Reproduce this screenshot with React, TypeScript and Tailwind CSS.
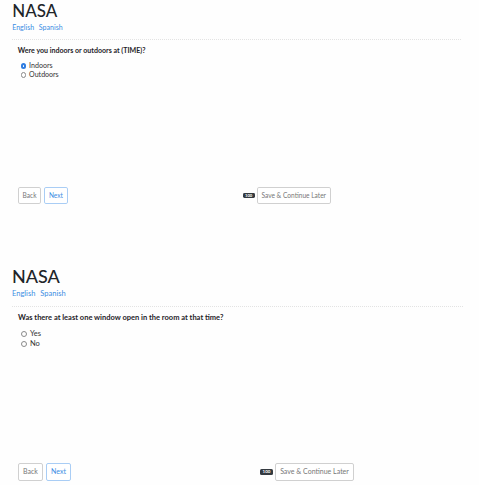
import React from 'react'

type Option = { label: string; checked?: boolean }

function Radio({ checked }: { checked?: boolean }) {
  if (checked) {
    return (
      <span className="inline-flex w-[6px] h-[6px] rounded-full bg-[#2f7de1] items-center justify-center">
        <span className="w-[2px] h-[2px] rounded-full bg-white" />
      </span>
    )
  }
  return <span className="inline-block w-[6px] h-[6px] rounded-full border border-[#8a8a8a] bg-white" />
}

function Panel({
  question,
  options,
  className,
  leftWidth,
}: {
  question: string
  options: Option[]
  className: string
  leftWidth: string
}) {
  return (
    <section className={`pl-[12px] flex flex-col ${className}`}>
      <h1 className="text-[18px] leading-[20px] text-[#212529] font-medium">NASA</h1>
      <div className="mt-[3px] flex gap-[5px] text-[7.5px] leading-[10px] text-[#3b8de3]">
        <span>English</span>
        <span>Spanish</span>
      </div>
      <div className="mt-[7px] border-t border-dotted border-[#e3e3e3]" />
      <div className="pl-[6px]">
        <p className="mt-[6px] text-[7.5px] leading-[10px] font-bold text-[#1f2328]">{question}</p>
        <div className="mt-[6px] pl-[3px] flex flex-col">
          {options.map((o) => (
            <label key={o.label} className="flex items-center gap-[3px] h-[10px] text-[7.5px] text-[#333]">
              <Radio checked={o.checked} />
              <span>{o.label}</span>
            </label>
          ))}
        </div>
        <div className="mt-[114px] flex items-center">
          <div className={`flex gap-[3px] ${leftWidth}`}>
            <button className="h-[18px] w-[25px] rounded-[2px] border border-[#d0d0d0] bg-white text-[7px] text-[#777]">
              Back
            </button>
            <button className="h-[18px] w-[25px] rounded-[2px] border border-[#a9cdf5] bg-white text-[7px] text-[#3b8de3]">
              Next
            </button>
          </div>
          <span className="h-[6px] w-[13px] rounded-[1.5px] bg-[#343a40] text-white text-[4.5px] leading-[6px] font-bold text-center">
            100
          </span>
          <button className="ml-[2px] h-[18px] w-[79px] rounded-[2px] border border-[#d0d0d0] bg-white text-[7px] text-[#777]">
            Save &amp; Continue Later
          </button>
        </div>
      </div>
    </section>
  )
}

export default function App() {
  return (
    <div className="w-[479px] h-[485px] overflow-hidden bg-[#fefefe] font-['Lato',sans-serif]">
      <div className="[zoom:0.94] h-[274px]">
        <Panel
          question="Were you indoors or outdoors at (TIME)?"
          options={[{ label: 'Indoors', checked: true }, { label: 'Outdoors' }]}
          className="pt-[2px] w-[490px] pl-[13px]"
          leftWidth="w-[239px]"
        />
      </div>
      <Panel
        question="Was there at least one window open in the room at that time?"
        options={[{ label: 'Yes' }, { label: 'No' }]}
        className="pt-[8px] w-[463px]"
        leftWidth="w-[242px]"
      />
    </div>
  )
}
